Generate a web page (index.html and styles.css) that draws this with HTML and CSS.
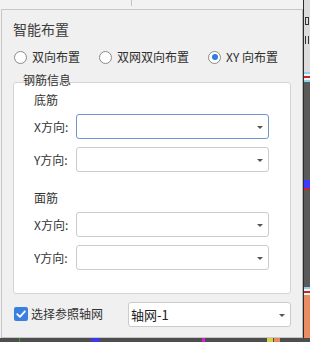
FILE: index.html
```html
<!DOCTYPE html>
<html lang="zh">
<head>
<meta charset="utf-8">
<link rel="stylesheet" href="styles.css">
</head>
<body>
<div class="screen">
  <div class="bg-tick"></div>
  <div class="cad-strip">
    <div class="cad-ruler">
      <span class="mark m1"></span>
      <span class="mark m2"></span>
    </div>
    <div class="cad-line cyan"></div>
    <div class="cad-line red"></div>
    <div class="cad-line cyan"></div>
    <div class="cad-dark">
      <div class="cad-blue"></div>
    </div>
    <div class="cad-line cyan"></div>
    <div class="cad-line red"></div>
    <div class="cad-orange"></div>
  </div>
  <div class="cad-bottom">
    <span class="bm green"></span>
    <span class="bm blue"></span>
    <span class="bm magenta"></span>
    <span class="bm yellow"></span>
    <span class="bm orange"></span>
  </div>

  <div class="panel">
    <div class="title">智能布置</div>
    <div class="radios">
      <label class="radio"><span class="circle"></span>双向布置</label>
      <label class="radio"><span class="circle"></span>双网双向布置</label>
      <label class="radio"><span class="circle on"></span>XY 向布置</label>
    </div>

    <div class="group">
      <div class="legend">钢筋信息</div>
      <div class="sub">底筋</div>
      <div class="row">
        <span class="lbl">X方向:</span>
        <div class="combo focus"><span class="arrow"></span></div>
      </div>
      <div class="row">
        <span class="lbl">Y方向:</span>
        <div class="combo"><span class="arrow"></span></div>
      </div>
      <div class="sub sub2">面筋</div>
      <div class="row">
        <span class="lbl">X方向:</span>
        <div class="combo"><span class="arrow"></span></div>
      </div>
      <div class="row">
        <span class="lbl">Y方向:</span>
        <div class="combo"><span class="arrow"></span></div>
      </div>
    </div>

    <div class="bottom">
      <label class="check">
        <span class="box">
          <svg width="14" height="14" viewBox="0 0 14 14"><path d="M3.2 7.2 L5.9 9.9 L10.9 4.3" fill="none" stroke="#fff" stroke-width="1.8" stroke-linecap="round" stroke-linejoin="round"/></svg>
        </span>选择参照轴网
      </label>
      <div class="combo grid-combo"><span class="val">轴网-1</span><span class="arrow"></span></div>
    </div>
  </div>
</div>
</body>
</html>
```
FILE: styles.css
```css
* { box-sizing: border-box; }
html, body { margin: 0; padding: 0; }
body {
  font-family: "Noto Sans CJK SC", "Noto Sans", sans-serif;
  font-size: 12px;
  color: #333;
}
.screen {
  position: relative;
  width: 310px;
  height: 342px;
  overflow: hidden;
  background: #f2f2f2;
  padding: 9px 0 0 1px;
}
.bg-tick {
  position: absolute;
  left: 131px;
  top: 0;
  width: 1px;
  height: 6px;
  background: #c4c4c4;
}
.cad-strip {
  position: absolute;
  left: 303px;
  top: 0;
  width: 7px;
  height: 338px;
  border-left: 1px solid #2a2a2a;
  display: flex;
  flex-direction: column;
}
.cad-ruler {
  position: relative;
  height: 72px;
  background: #dcdcdc;
}
.mark {
  position: absolute;
  left: 1px;
  width: 4px;
  height: 8px;
  border: 1px solid #333;
}
.m1 { top: 17px; }
.m2 { top: 36px; border-top: none; border-bottom: none; }
.cad-line { height: 2px; }
.cad-line.cyan { background: #8fd3e6; }
.cad-line.red { background: #c62828; margin: 2px 0; }
.cad-dark {
  position: relative;
  flex: 1;
  background: #5a5a5a;
}
.cad-blue {
  position: absolute;
  left: 0;
  top: 98px;
  width: 7px;
  height: 10px;
  background: #3b3bff;
  border-bottom: 2px solid #d02020;
}
.cad-orange {
  height: 43px;
  background: #ec8c62;
}
.cad-bottom {
  position: absolute;
  left: 0;
  top: 338px;
  width: 310px;
  height: 4px;
  background: #4e4e4e;
}
.bm { position: absolute; top: 0; height: 4px; }
.bm.green { left: 19px; width: 1px; background: #3a9a3a; }
.bm.blue { left: 91px; width: 9px; background: #3a3adf; }
.bm.magenta { left: 202px; width: 3px; background: #d020d0; }
.bm.yellow { left: 267px; width: 6px; background: #d8cf48; }
.bm.orange { left: 274px; width: 6px; background: #e58a62; }

.panel {
  width: 302px;
  height: 329px;
  background: #f0f0f0;
  border: 1px solid #c6c6c6;
  border-right-color: #b8b8b8;
  padding: 9px 0 0 11px;
  display: flex;
  flex-direction: column;
}
.title {
  font-size: 14px;
  line-height: 20px;
  color: #3c3c3c;
}
.radios {
  display: flex;
  margin-top: 8px;
  height: 20px;
  align-items: center;
  line-height: 20px;
  color: #2e2e2e;
}
.radio {
  display: flex;
  align-items: center;
  padding-left: 1px;
}
.radio + .radio { margin-left: 18px; }
.circle {
  width: 13px;
  height: 13px;
  border-radius: 50%;
  border: 1px solid #8a8a8a;
  background: #fff;
  margin-right: 5px;
  display: flex;
  align-items: center;
  justify-content: center;
}
.circle.on::after {
  content: "";
  width: 6px;
  height: 6px;
  border-radius: 50%;
  background: #2f7de1;
}

.group {
  position: relative;
  margin-top: 15px;
  width: 278px;
  height: 212px;
  background: #fff;
  border: 1px solid #d4d4d4;
  border-radius: 3px;
  padding: 9px 0 0 20px;
  display: flex;
  flex-direction: column;
}
.legend {
  position: absolute;
  left: 9px;
  top: -11px;
  line-height: 16px;
  color: #333;
}
.sub {
  line-height: 16px;
  height: 16px;
  margin-bottom: 6px;
}
.sub2 { margin-top: 18px; }
.row {
  display: flex;
  align-items: center;
  height: 25px;
}
.row + .row { margin-top: 8px; }
.lbl {
  width: 42px;
  line-height: 16px;
}
.combo {
  position: relative;
  width: 193px;
  height: 25px;
  background: #fff;
  border: 1px solid #cbcbcb;
  border-radius: 3px;
  display: flex;
  align-items: center;
}
.combo.focus { border-color: #7096d8; }
.arrow {
  position: absolute;
  right: 5px;
  top: 50%;
  margin-top: -1px;
  width: 0;
  height: 0;
  border-left: 3px solid transparent;
  border-right: 3px solid transparent;
  border-top: 3px solid #555;
}
.bottom {
  display: flex;
  align-items: center;
  margin-top: 8px;
  height: 25px;
}
.check {
  display: flex;
  align-items: center;
  width: 115px;
  line-height: 16px;
  color: #333;
  padding-left: 1px;
  margin-top: -2px;
}
.box {
  width: 14px;
  height: 14px;
  border-radius: 2px;
  background: #3a80e0;
  margin-right: 3px;
  display: flex;
}
.grid-combo { width: 163px; }
.val {
  font-size: 13px;
  line-height: 16px;
  padding-left: 2px;
  color: #222;
}
```
